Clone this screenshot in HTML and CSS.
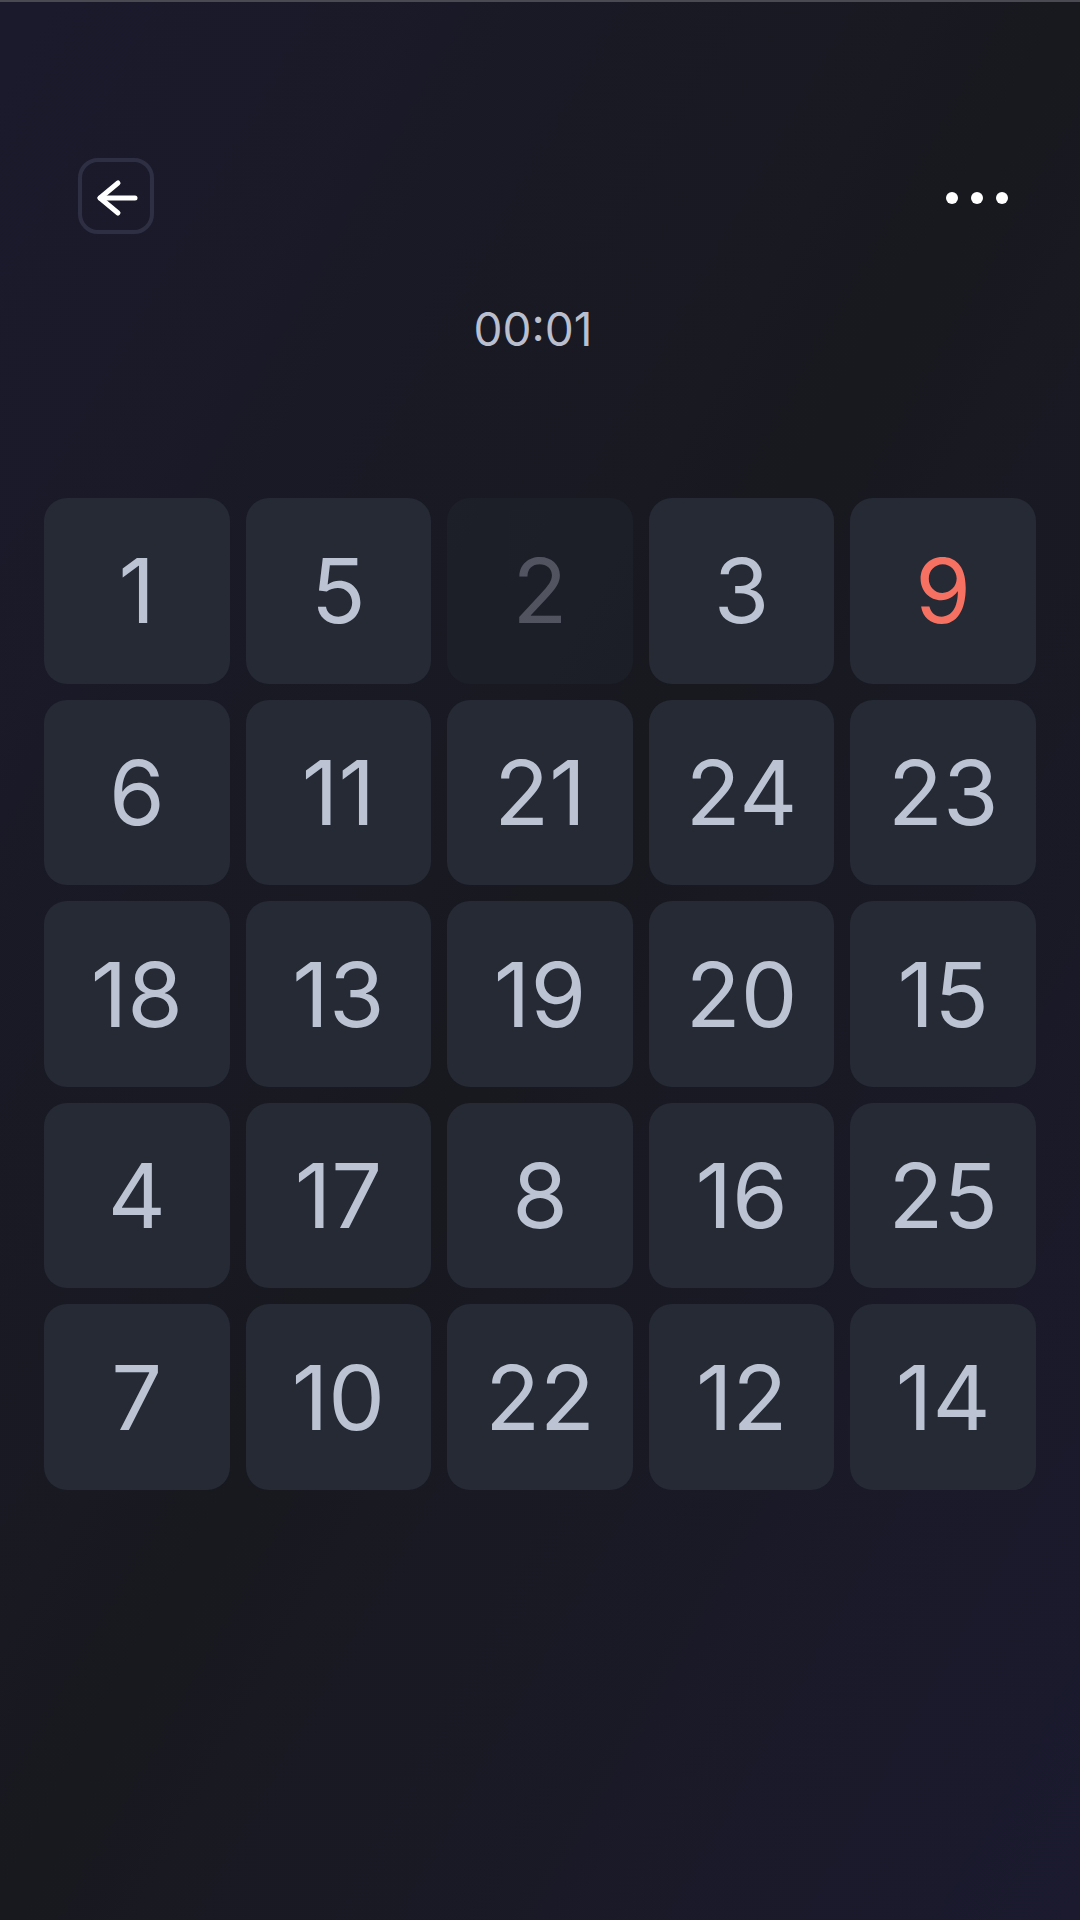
FILE: index.html
```html
<!DOCTYPE html>
<html lang="en">
<head>
    <meta charset="UTF-8">
    <meta name="viewport" content="width=device-width, initial-scale=1.0">
    <title>Schulte Table</title>
    <link rel="stylesheet" href="styles.css">
</head>
<body>
    <div class="screen">
        <header class="top-bar">
            <button class="back-btn" aria-label="Back">
                <svg width="70" height="70" viewBox="0 0 70 70" fill="none" stroke="#ffffff" stroke-width="5" stroke-linecap="round" stroke-linejoin="round">
                    <path d="M53 36H18"/>
                    <path d="M36 21L18 36L36 51"/>
                </svg>
            </button>
            <button class="more-btn" aria-label="More">
                <span class="dot"></span>
                <span class="dot"></span>
                <span class="dot"></span>
            </button>
        </header>

        <div class="timer">00:01</div>

        <div class="board">
            <div class="tile">1</div>
            <div class="tile">5</div>
            <div class="tile done">2</div>
            <div class="tile">3</div>
            <div class="tile next">9</div>

            <div class="tile">6</div>
            <div class="tile">11</div>
            <div class="tile">21</div>
            <div class="tile">24</div>
            <div class="tile">23</div>

            <div class="tile">18</div>
            <div class="tile">13</div>
            <div class="tile">19</div>
            <div class="tile">20</div>
            <div class="tile">15</div>

            <div class="tile">4</div>
            <div class="tile">17</div>
            <div class="tile">8</div>
            <div class="tile">16</div>
            <div class="tile">25</div>

            <div class="tile">7</div>
            <div class="tile">10</div>
            <div class="tile">22</div>
            <div class="tile">12</div>
            <div class="tile">14</div>
        </div>
    </div>
</body>
</html>
```

FILE: styles.css
```css
* {
    margin: 0;
    padding: 0;
    box-sizing: border-box;
}

body {
    font-family: Inter, 'Noto Sans', sans-serif;
    min-height: 1920px;
    background: linear-gradient(to bottom right, #1b1a2d 0%, #18191f 50%, #1b1a2f 100%);
    border-top: 2px solid #4a4a52;
}

.screen {
    padding: 156px 44px 0;
}

.top-bar {
    display: flex;
    align-items: center;
    justify-content: space-between;
    height: 76px;
    padding: 0 28px 0 34px;
}

.back-btn {
    width: 76px;
    height: 76px;
    border: 4px solid #2f2f44;
    border-radius: 20px;
    background: transparent;
    display: grid;
    place-items: center;
    cursor: pointer;
}

.more-btn {
    display: flex;
    align-items: center;
    gap: 13px;
    margin-top: 4px;
    background: none;
    border: none;
    cursor: pointer;
}

.more-btn .dot {
    width: 12px;
    height: 12px;
    border-radius: 50%;
    background: #ffffff;
}

.timer {
    margin-top: 67px;
    padding-right: 14px;
    text-align: center;
    font-size: 46px;
    line-height: 56px;
    color: #b9bfce;
}

.board {
    margin-top: 141px;
    display: grid;
    grid-template-columns: repeat(5, 1fr);
    gap: 16px;
}

.tile {
    aspect-ratio: 1;
    background: #252a35;
    border-radius: 23px;
    display: flex;
    align-items: center;
    justify-content: center;
    font-size: 90px;
    color: #bcc3d3;
}

.tile.done {
    opacity: 0.35;
}

.tile.next {
    color: #f77163;
}
```
